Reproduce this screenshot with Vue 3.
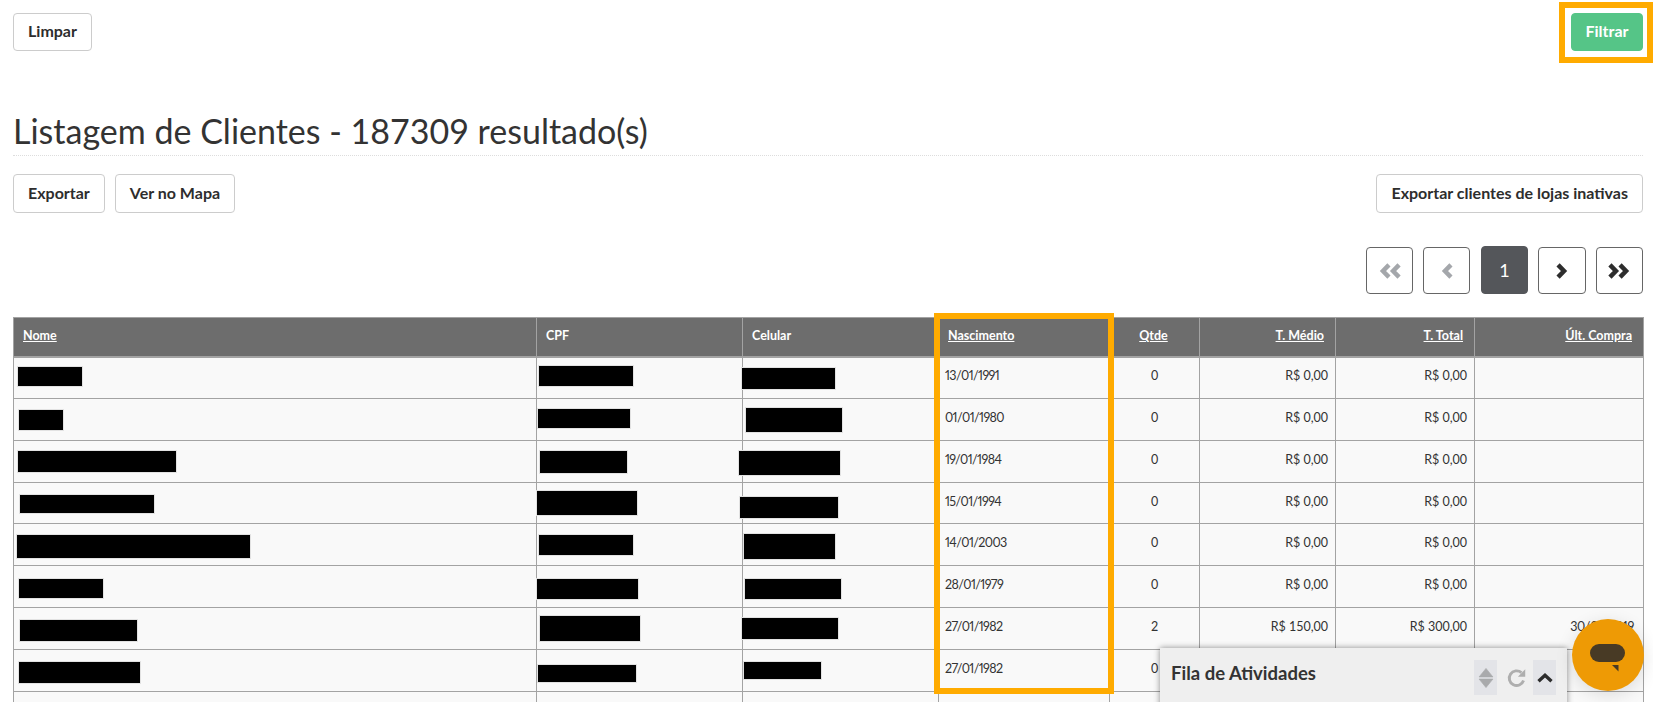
<script setup>
const cols = [
  { label: 'Nome', link: true, w: 523 },
  { label: 'CPF', w: 206 },
  { label: 'Celular', w: 196 },
  { label: 'Nascimento', link: true, w: 171 },
  { label: 'Qtde', link: true, w: 90, cls: 'c' },
  { label: 'T. Médio', link: true, w: 136, cls: 'r' },
  { label: 'T. Total', link: true, w: 139, cls: 'r' },
  { label: 'Últ. Compra', link: true, w: 169, cls: 'r' }
]
const rows = [
  { top: 358, d: '13/01/1991', q: '0', m: 'R$ 0,00', t: 'R$ 0,00', u: '', r: [[17, 367, 81, 386], [538, 366, 632, 386], [741, 368, 834, 389]] },
  { top: 397, d: '01/01/1980', q: '0', m: 'R$ 0,00', t: 'R$ 0,00', u: '', r: [[18, 408, 62, 428], [537, 407, 629, 426], [745, 406, 841, 430]] },
  { top: 439, d: '19/01/1984', q: '0', m: 'R$ 0,00', t: 'R$ 0,00', u: '', r: [[17, 449, 175, 470], [539, 449, 626, 471], [738, 449, 839, 473]] },
  { top: 480, d: '15/01/1994', q: '0', m: 'R$ 0,00', t: 'R$ 0,00', u: '', r: [[19, 492, 153, 510], [536, 488, 636, 512], [739, 494, 837, 515]] },
  { top: 522, d: '14/01/2003', q: '0', m: 'R$ 0,00', t: 'R$ 0,00', u: '', r: [[16, 533, 249, 556], [538, 533, 632, 553], [743, 532, 834, 557]] },
  { top: 564, d: '28/01/1979', q: '0', m: 'R$ 0,00', t: 'R$ 0,00', u: '', r: [[18, 577, 102, 596], [536, 577, 637, 597], [744, 577, 840, 597]] },
  { top: 606, d: '27/01/1982', q: '2', m: 'R$ 150,00', t: 'R$ 300,00', u: '30/01/2019', r: [[19, 618, 136, 639], [539, 614, 639, 639], [741, 616, 837, 637]] },
  { top: 648, d: '27/01/1982', q: '0', m: '', t: '', u: '', r: [[18, 660, 139, 681], [537, 663, 635, 680], [743, 660, 820, 677]] },
  { top: 690, d: '', q: '', m: '', t: '', u: '', r: [] }
]
const box = (b, top, left) => ({
  left: b[0] - left + 'px',
  top: b[1] - top + 'px',
  width: b[2] - b[0] + 'px',
  height: b[3] - b[1] + 'px'
})
const lefts = [13, 536, 742]
</script>

<template>
  <div class="page">
    <div class="bar">
      <button class="btn">Limpar</button>
      <button class="btn green">Filtrar</button>
    </div>
    <h1 class="title">Listagem de Clientes - 187309 resultado(s)</h1>
    <div class="bar actions">
      <div class="group">
        <button class="btn tall">Exportar</button>
        <button class="btn tall">Ver no Mapa</button>
      </div>
      <button class="btn tall">Exportar clientes de lojas inativas</button>
    </div>
    <div class="pager">
      <button class="pg off"><svg width="25" height="18" viewBox="0 0 22 16"><path d="M10.500 2.600 5.200 8l5.300 5.400M19.500 2.600 14.200 8l5.300 5.400" fill="none" stroke="currentColor" stroke-width="4"/></svg></button>
      <button class="pg off"><svg width="14" height="18" viewBox="0 0 12 16"><path d="M9.500 2.600 4.200 8l5.300 5.400" fill="none" stroke="currentColor" stroke-width="4"/></svg></button>
      <button class="pg cur">1</button>
      <button class="pg wide"><svg width="14" height="18" viewBox="0 0 12 16"><path d="M2.500 2.600 7.800 8l-5.300 5.400" fill="none" stroke="currentColor" stroke-width="4"/></svg></button>
      <button class="pg"><svg width="25" height="18" viewBox="0 0 22 16"><path d="M2.500 2.600 7.800 8l-5.300 5.400M11.500 2.600 16.800 8l-5.300 5.400" fill="none" stroke="currentColor" stroke-width="4"/></svg></button>
    </div>
    <table class="grid">
      <colgroup><col v-for="c in cols" :key="c.label" :style="{ width: c.w + 'px' }"></colgroup>
      <thead>
        <tr>
          <th v-for="c in cols" :key="c.label" :class="c.cls"><a v-if="c.link">{{ c.label }}</a><template v-else>{{ c.label }}</template></th>
        </tr>
      </thead>
      <tbody>
        <tr v-for="(row, i) in rows" :key="i">
          <td v-for="n in 3" :key="n" class="cell">
            <i v-if="row.r[n - 1]" class="mask" :style="box(row.r[n - 1], row.top, lefts[n - 1])"></i>
          </td>
          <td class="date">{{ row.d }}</td>
          <td class="c">{{ row.q }}</td>
          <td class="r">{{ row.m }}</td>
          <td class="r">{{ row.t }}</td>
          <td class="r last">{{ row.u }}</td>
        </tr>
      </tbody>
    </table>
    <div class="mark mark-filter"></div>
    <div class="mark mark-col"></div>
    <div class="queue">
      <strong>Fila de Atividades</strong>
      <div class="tools">
        <span class="tool"><svg width="16" height="22" viewBox="0 0 15 20"><path d="M7.500 1 14 9H1zM7.500 19 1 11h13z" fill="#a9aaac" stroke="#a9aaac" stroke-width=".6" stroke-linejoin="round"/></svg></span>
        <span class="tool plain"><svg class="reload" width="20" height="20" viewBox="0 0 18 18"><path d="M14.900 11.300A6.600 6.600 0 1 1 13 4.200" fill="none" stroke="#aeaeae" stroke-width="2.600"/><path d="M16.400 1.200v6.600H9.800z" fill="#aeaeae"/></svg></span>
        <span class="tool"><svg width="16" height="10" viewBox="0 0 16 10"><path d="m1.500 8.300 6.500-6 6.500 6" fill="none" stroke="#2d2d2d" stroke-width="3.400"/></svg></span>
      </div>
    </div>
    <div class="chat">
      <svg width="36" height="28" viewBox="0 0 36 28"><rect x="0" y="0" width="35" height="18" rx="9" fill="#483a25"/><path d="M22 21h6.500v6.500z" fill="#483a25"/></svg>
    </div>
  </div>
</template>

<style>
html, body { margin: 0; overflow: hidden; background: #fff; }
</style>

<style scoped>
.page {
  position: relative;
  width: 1653px;
  height: 702px;
  box-sizing: border-box;
  padding: 13px 10px 0 13px;
  overflow: hidden;
  font-family: Lato, "Liberation Sans", sans-serif;
  color: #333;
}
.bar { display: flex; justify-content: space-between; align-items: flex-start; }
.btn {
  height: 38px;
  padding: 0 14px 3px;
  font: 700 16px Lato, sans-serif;
  color: #2d2d2d;
  background: #fff;
  border: 1px solid #ccc;
  border-radius: 4px;
}
.tall { height: 39px; }
.green { width: 72px; padding: 0 0 3px; background: #55c587; border-color: #55c587; color: #fff; }
.title {
  margin: 0;
  margin-top: 56px;
  height: 49px;
  box-sizing: border-box;
  border-bottom: 1px dotted #ddd;
  font: 400 34px/47px Lato, sans-serif;
  color: #333;
}
.actions { margin-top: 18px; }
.group { display: flex; gap: 10px; }
.pager { display: flex; justify-content: flex-end; align-items: flex-end; gap: 10px; margin-top: 33px; }
.pg {
  display: flex;
  align-items: center;
  justify-content: center;
  width: 47px;
  height: 47px;
  padding: 0;
  background: #fff;
  border: 1px solid #666;
  border-radius: 4px;
  color: #2d2d2d;
  font: 400 18px Lato, sans-serif;
}
.off { color: #a4a7ab; }
.wide { width: 48px; }
.cur { height: 48px; margin-left: 1px; background: #54565a; border-color: #54565a; color: #fff; }
.grid {
  width: 1630px;
  margin-top: 23px;
  table-layout: fixed;
  border-collapse: collapse;
  font-size: 12.500px;
  background: #f9f9f9;
}
th {
  height: 39px;
  box-sizing: border-box;
  padding: 0 11px 3px 9px;
  background: #6d6d6d;
  border: 1px solid #a3a3a3;
  border-bottom-width: 2px;
  color: #fff;
  font-weight: 700;
  text-align: left;
}
th a { text-decoration: underline; }
td {
  height: 41.860px;
  box-sizing: border-box;
  padding: 0 7px 4px;
  border: 1px solid #a3a3a3;
}
.date { padding-left: 6px; font-variant-numeric: proportional-nums; letter-spacing: -.6px; }
.last { padding-right: 9px; font-variant-numeric: proportional-nums; letter-spacing: -.3px; }
.c { text-align: center; }
.r { text-align: right; }
.cell { position: relative; padding: 0; }
.mask {
  position: absolute;
  display: block;
  background: #000;
  box-shadow: 0 0 0 1px #e2e2e2;
}
.mark { position: absolute; box-sizing: border-box; border: 6px solid #ffab00; }
.mark-filter { left: 1559px; top: 2px; width: 94px; height: 61px; }
.mark-col { left: 934px; top: 313px; width: 180px; height: 381px; }
.queue {
  position: absolute;
  left: 1160px;
  top: 648px;
  width: 407px;
  height: 60px;
  box-sizing: border-box;
  padding: 12px 11px 0 11px;
  display: flex;
  justify-content: space-between;
  align-items: flex-start;
  background: #efefef;
  box-shadow: 0 0 6px rgba(0, 0, 0, .45);
}
.queue strong { font-size: 18.500px; line-height: 26px; color: #333; }
.tools { display: flex; }
.tool {
  display: flex;
  align-items: center;
  justify-content: center;
  width: 23px;
  height: 35px;
  background: #e3e4e8;
}
.plain { width: 36px; background: none; }
.reload { margin-left: 3px; }
.chat {
  position: absolute;
  left: 1572px;
  top: 619px;
  width: 72px;
  height: 72px;
  border-radius: 50%;
  background: #ee9a05;
  box-shadow: 0 4px 18px rgba(0, 0, 0, .12);
  display: flex;
  align-items: flex-start;
  justify-content: center;
  padding: 25px 0 0 0;
  box-sizing: border-box;
}
</style>
